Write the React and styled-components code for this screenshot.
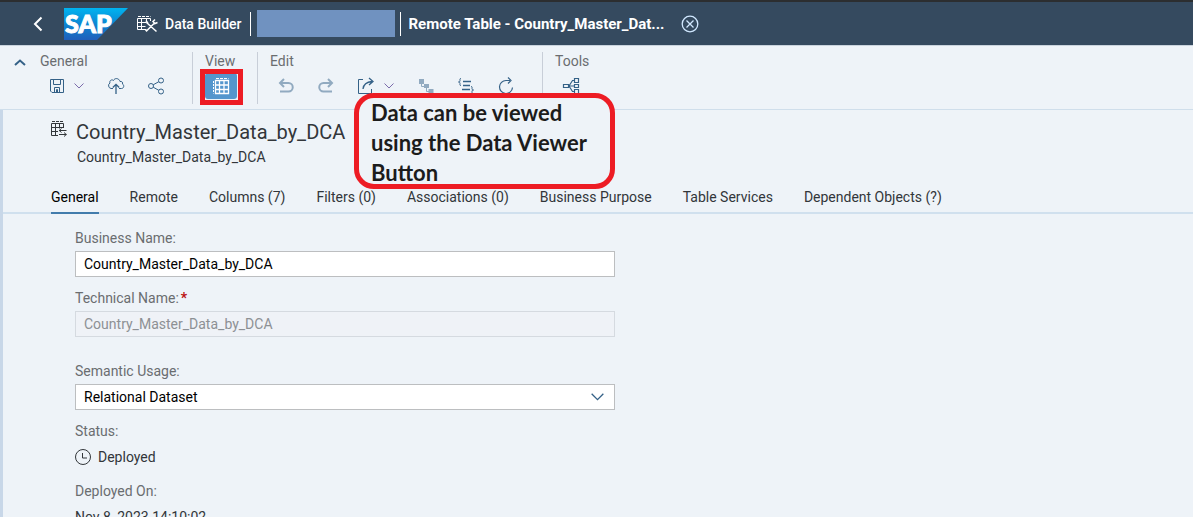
import React, { useState } from "react";
import styled, { createGlobalStyle, css } from "styled-components";

const GlobalStyle = createGlobalStyle`
  * { box-sizing: border-box; }
  body {
    margin: 0;
    background: #eef3f8;
    color: #32363a;
    font-family: Roboto, "Liberation Sans", sans-serif;
    font-size: 14px;
    line-height: 18px;
  }
  button, input, select { font: inherit; }
`;

const Page = styled.div`
  display: flex;
  flex-direction: column;
  height: 100vh;
  overflow: hidden;
`;

const Shell = styled.header`
  display: flex;
  flex: none;
  align-items: center;
  height: 46px;
  padding-left: 24px;
  border-top: 2px solid #2c2e30;
  border-bottom: 1px solid #c9d3dd;
  background: #354a5f;
  color: #fff;
`;

const IconButton = styled.button`
  display: flex;
  align-items: center;
  justify-content: center;
  flex: none;
  width: ${(p) => p.$width || 32}px;
  height: 26px;
  padding: 0;
  border: 0;
  border-radius: 3px;
  background: none;
  color: ${(p) => p.$color || "#346187"};
  cursor: pointer;
  ${(p) =>
    p.$active &&
    css`
      background: #5496cd;
      color: #fff;
    `}
  &:disabled {
    color: #91aac0;
    cursor: default;
  }
`;

const Logo = styled.svg`
  flex: none;
  margin: 0 9px 0 12px;
`;

const AppLink = styled.a`
  display: flex;
  align-items: center;
  gap: 7px;
  color: #fff;
  font-weight: 500;
  text-decoration: none;
  white-space: nowrap;
`;

const ShellDivider = styled.span`
  width: 1px;
  height: 24px;
  margin-left: ${(p) => p.$gap}px;
  background: #fff;
`;

const SpaceName = styled.span`
  width: 138px;
  height: 27px;
  margin-left: 6px;
  background: #7092c0;
`;

const ObjectName = styled.h1`
  margin: 0 8px 0 7px;
  font-size: 15px;
  font-weight: 700;
  line-height: 18px;
  width: 258px;
  white-space: nowrap;
`;

const Toolbar = styled.div`
  display: flex;
  flex: none;
  height: 64px;
  padding: 6px 0 5px;
  border-bottom: 1px solid #cfdeeb;
`;

const Collapse = styled.div`
  width: 40px;
  padding: 0 0 0 4px;
  margin-top: -3px;
`;

const Group = styled.section`
  padding: 0 20px 0 ${(p) => (p.$first ? 0 : 12)}px;
  border-left: ${(p) => (p.$first ? 0 : 1)}px solid #c8ced8;
`;

const GroupTitle = styled.h2`
  margin: 0 0 3px;
  color: #6a6d70;
  font-size: 14px;
  font-weight: 400;
  line-height: 18px;
`;

const Tools = styled.div`
  display: flex;
  gap: 8px;
`;

const Split = styled.div`
  display: flex;
  width: 52px;
`;

const Highlight = styled.div`
  position: relative;
  &::after {
    content: "";
    position: absolute;
    inset: -4px -6px -6px -5px;
    border: 5px solid #ed1c24;
    pointer-events: none;
  }
`;

const Content = styled.main`
  position: relative;
  flex: 1;
  border-left: 3px solid #c8d7e8;
`;

const ObjectHeader = styled.div`
  display: flex;
  gap: 8px;
  padding: 10px 0 0 48px;
`;

const ObjectTitle = styled.h2`
  margin: 0;
  font-size: 20px;
  font-weight: 400;
  line-height: 24px;
`;

const Subtitle = styled.p`
  margin: 4px 0 0 1px;
`;

const TabBar = styled.nav`
  display: flex;
  gap: 31px;
  margin-top: 20px;
  padding-left: 48px;
  border-bottom: 2px solid #d0e0ee;
`;

const Tab = styled.button`
  height: 28px;
  margin-bottom: -2px;
  padding: 0 0 4px;
  border: 0;
  border-bottom: 2px solid ${(p) => (p.$selected ? "#427cac" : "transparent")};
  background: none;
  color: ${(p) => (p.$selected ? "#000" : "#32363a")};
  white-space: nowrap;
  cursor: pointer;
`;

const Form = styled.form`
  display: flex;
  flex-direction: column;
  gap: 12px;
  max-width: 612px;
  padding: 15px 0 0 72px;
`;

const Field = styled.div`
  display: flex;
  flex-direction: column;
  gap: 4px;
  margin-bottom: ${(p) => (p.$wide ? 13 : 0)}px;
`;

const Label = styled.label`
  color: #6a6d70;
`;

const Required = styled.span`
  margin-left: 2px;
  color: #bb1111;
  font-weight: 700;
`;

const control = css`
  width: 100%;
  height: 26px;
  padding: 0 8px;
  border: 1px solid #bcbec0;
  border-radius: 0;
  background: #fff;
  color: #000;
`;

const Input = styled.input`
  ${control}
  &:disabled {
    border-color: #d5dae0;
    background: #eff2f7;
    color: #8d9094;
  }
`;

const SelectWrap = styled.div`
  display: grid;
  align-items: center;
  > * { grid-area: 1 / 1; }
  > svg {
    justify-self: end;
    margin-right: 11px;
    color: #346187;
    pointer-events: none;
  }
`;

const Select = styled.select`
  ${control}
  appearance: none;
`;

const Value = styled.div`
  display: flex;
  align-items: center;
  gap: 7px;
  min-height: 26px;
`;

const Callout = styled.aside`
  position: absolute;
  top: -17px;
  left: 351px;
  width: 261px;
  height: 96px;
  padding: 0 8px 0 12px;
  border: 5px solid #ed1c24;
  border-radius: 20px;
  background: #eef3f8;
  color: #1c1c1c;
  font-family: Lato, "Open Sans", sans-serif;
  font-size: 22px;
  font-weight: 700;
  line-height: 30px;
`;

const Icon = ({ size = 18, stroke = 1, children }) => (
  <svg
    width={size}
    height={size}
    viewBox={`0 0 ${size} ${size}`}
    fill="none"
    stroke="currentColor"
    strokeWidth={stroke}
    aria-hidden="true"
  >
    {children}
  </svg>
);

const Chevron = ({ width = 10, height = 6, color = "currentColor" }) => (
  <svg width={width} height={height} viewBox="0 0 10 6" fill="none" stroke={color} aria-hidden="true">
    <path d="M.5.5 5 5 9.500.5" />
  </svg>
);

const SapLogo = () => (
  <Logo width="64" height="32" viewBox="0 0 64 32" role="img" aria-label="SAP">
    <defs>
      <linearGradient id="sap" x1="0" y1="0" x2="0" y2="1">
        <stop offset="0" stopColor="#00b4f0" />
        <stop offset="0.5" stopColor="#0d86d2" />
        <stop offset="1" stopColor="#1f5fbb" />
      </linearGradient>
    </defs>
    <path d="M0 0h64L33 32H0z" fill="url(#sap)" />
    <text x="1" y="25" fill="#fff" stroke="#fff" strokeWidth="1" fontFamily="Lato" fontWeight="900" fontSize="25">
      SAP
    </text>
  </Logo>
);

const BuilderIcon = () => (
  <svg width="21" height="18" viewBox="0 0 21 18" fill="none" stroke="currentColor" aria-hidden="true">
    <path d="M1 1.500H13.500" strokeDasharray="3 1" />
    <path d="M9 14.500H.5v-11h13V6M.5 7.500h9M.5 11.500h8M4.500 3.500v11M9.500 3.500v4" />
    <path d="m9.500 16 8-8M9.500 7.500l10 9M18 4.500l-2 2 2 2 2.500-1M9 5.500l2 3M8.500 14.500l1.500 2" strokeWidth="1.500" />
  </svg>
);

const SaveIcon = () => (
  <Icon>
    <path d="M3.500 2.500h13v13H5L3.500 14zM6.500 2.500v5h7v-5M7.500 15.500v-5h5v5M9.500 15v-2.500h1V15" />
  </Icon>
);

const CloudIcon = () => (
  <Icon>
    <path d="M6 11.500H4a3 3 0 0 1-1-5.500C2 3.500 5 2 6.500 3.500 7.500.8 12 .8 13 4.500c2-.5 3 1 2.500 2.500 2 1 1.500 4.500-1 4.500H12" />
    <path d="M9 17V7.500M5.800 10.500 9 7.300l3.200 3.200" strokeWidth="1.300" />
  </Icon>
);

const ShareIcon = () => (
  <Icon>
    <circle cx="4" cy="9" r="2.500" />
    <circle cx="14" cy="3.500" r="2.500" />
    <circle cx="14" cy="14.500" r="2.500" />
    <path d="m6.200 7.800 5.600-3.100M6.200 10.200l5.600 3.100" />
  </Icon>
);

const TableIcon = () => (
  <Icon>
    <path d="M4 1.500h12.500" strokeDasharray="3 1" />
    <path d="M1.500 4v12.500" strokeDasharray="2 1" />
    <path d="M3.500 3.500h13v13h-13zM3.500 8h13M3.500 12.500h13M7.500 3.500v13M12 3.500v13" strokeWidth="1.300" />
  </Icon>
);

const UndoIcon = ({ flip }) => (
  <Icon size={16} stroke={2}>
    <g transform={flip ? "translate(16 0) scale(-1 1)" : undefined}>
      <path d="M6 1 2 5l4 4M2 5h8.500a4 4 0 0 1 0 8.500H2" />
    </g>
  </Icon>
);

const ExportIcon = () => (
  <Icon>
    <path d="M6 2.500H1.500v14h13V12" />
    <path d="M6 12c.5-4.500 3-7 9-7.500M12 1l4 3.500L12 8" strokeWidth="1.300" />
  </Icon>
);

const LineageIcon = () => (
  <Icon size={16}>
    <g fill="currentColor" stroke="none">
      <path d="M1 1h5v5H1zM6 6h5v4H6zM10.500 11h5v4.500h-5z" />
    </g>
    <path d="M3.500 6v2.500H6M8.500 10v3.500H11" />
  </Icon>
);

const CodeIcon = () => (
  <Icon>
    <path d="M4 1.500c-1.500 0-1 1-1 2S2.500 5 1.500 5C2.500 5 3 5.500 3 6.500s-.5 2 1 2M14 9.500c1.500 0 1 1 1 2s.5 1.500 1.500 1.500c-1 0-1.500.5-1.500 1.500s.5 2-1 2" />
    <path d="M6 4.500h8M6 8.500h7M5 12.500h8" strokeWidth="1.300" />
  </Icon>
);

const RefreshIcon = () => (
  <Icon>
    <path d="M13 3.500H9a6.500 6.500 0 1 0 6.500 7M11 .5l3 3-3 3" strokeWidth="1.200" />
  </Icon>
);

const ImpactIcon = () => (
  <Icon>
    <path d="M1.500 7.500h5v3h-5zM12.500 1.500h4v4h-4zM12.500 7.500h4v3h-4zM12.500 12.500h4v4h-4zM6.500 9h6M7 9l3.500-5.500h2M7 9l3.500 5.500h2" strokeWidth="1.200" />
  </Icon>
);

const RemoteTableIcon = () => (
  <Icon size={17}>
    <path d="M1 1.500h12" strokeDasharray="3 1" />
    <path d="M7 15.500H.5v-12h12V8M.5 7.500h12M.5 11.500H7M4.500 3.500v12M8.500 3.500v5" />
    <path d="M8 10.500h7.500M10.500 8.500l-2.300 2 2.300 2M8 14.500h7.500M13 12.500l2.300 2-2.300 2" />
  </Icon>
);

const ClockIcon = () => (
  <Icon size={16}>
    <circle cx="8" cy="8" r="7.500" />
    <path d="M7.500 4v5H12" />
  </Icon>
);

const TABS = [
  "General",
  "Remote",
  "Columns (7)",
  "Filters (0)",
  "Associations (0)",
  "Business Purpose",
  "Table Services",
  "Dependent Objects (?)",
];

export default function App() {
  const [tab, setTab] = useState("General");
  const [name, setName] = useState("Country_Master_Data_by_DCA");

  return (
    <Page>
      <GlobalStyle />
      <Shell>
        <IconButton $width={28} $color="#fff" aria-label="Back">
          <svg width="10" height="16" viewBox="0 0 10 16" fill="none" stroke="currentColor" strokeWidth="2">
            <path d="M8.500 1.500 2 8l6.500 6.500" />
          </svg>
        </IconButton>
        <SapLogo />
        <AppLink href="#builder">
          <BuilderIcon />
          Data Builder
        </AppLink>
        <ShellDivider $gap={9} />
        <SpaceName />
        <ShellDivider $gap={5} />
        <ObjectName>Remote Table - Country_Master_Dat...</ObjectName>
        <IconButton $color="#d1e8ff" aria-label="Close">
          <Icon stroke={1.3}>
            <circle cx="9" cy="9" r="7.800" />
            <path d="m5.500 5.500 7 7M12.500 5.500l-7 7" />
          </Icon>
        </IconButton>
      </Shell>

      <Toolbar>
        <Collapse>
          <IconButton aria-label="Collapse toolbar">
            <svg width="12" height="7" viewBox="0 0 12 7" fill="none" stroke="currentColor" strokeWidth="2">
              <path d="m1 6 5-4.500L11 6" />
            </svg>
          </IconButton>
        </Collapse>
        <Group $first>
          <GroupTitle>General</GroupTitle>
          <Tools>
            <Split>
              <IconButton aria-label="Save"><SaveIcon /></IconButton>
              <IconButton $width={14} aria-label="Save options"><Chevron color="#7a6bab" /></IconButton>
            </Split>
            <IconButton aria-label="Deploy"><CloudIcon /></IconButton>
            <IconButton aria-label="Share"><ShareIcon /></IconButton>
          </Tools>
        </Group>
        <Group>
          <GroupTitle>View</GroupTitle>
          <Tools>
            <Highlight>
              <IconButton $active aria-label="Data Viewer"><TableIcon /></IconButton>
            </Highlight>
          </Tools>
        </Group>
        <Group>
          <GroupTitle>Edit</GroupTitle>
          <Tools>
            <IconButton disabled aria-label="Undo"><UndoIcon /></IconButton>
            <IconButton disabled aria-label="Redo"><UndoIcon flip /></IconButton>
            <Split>
              <IconButton aria-label="Export"><ExportIcon /></IconButton>
              <IconButton $width={14} aria-label="Export options"><Chevron color="#7a6bab" /></IconButton>
            </Split>
            <IconButton disabled aria-label="Lineage"><LineageIcon /></IconButton>
            <IconButton aria-label="Edit CSN"><CodeIcon /></IconButton>
            <IconButton aria-label="Refresh"><RefreshIcon /></IconButton>
          </Tools>
        </Group>
        <Group>
          <GroupTitle>Tools</GroupTitle>
          <Tools>
            <IconButton aria-label="Impact and lineage analysis"><ImpactIcon /></IconButton>
          </Tools>
        </Group>
      </Toolbar>

      <Content>
        <ObjectHeader>
          <RemoteTableIcon />
          <div>
            <ObjectTitle>Country_Master_Data_by_DCA</ObjectTitle>
            <Subtitle>Country_Master_Data_by_DCA</Subtitle>
          </div>
        </ObjectHeader>
        <TabBar>
          {TABS.map((t) => (
            <Tab key={t} type="button" $selected={t === tab} onClick={() => setTab(t)}>
              {t}
            </Tab>
          ))}
        </TabBar>
        <Form>
          <Field>
            <Label htmlFor="business">Business Name:</Label>
            <Input id="business" value={name} onChange={(e) => setName(e.target.value)} />
          </Field>
          <Field $wide>
            <Label htmlFor="technical">
              Technical Name:<Required>*</Required>
            </Label>
            <Input id="technical" disabled value="Country_Master_Data_by_DCA" />
          </Field>
          <Field>
            <Label htmlFor="usage">Semantic Usage:</Label>
            <SelectWrap>
              <Select id="usage" defaultValue="Relational Dataset">
                <option>Relational Dataset</option>
                <option>Dimension</option>
                <option>Fact</option>
              </Select>
              <Chevron width={13} height={8} />
            </SelectWrap>
          </Field>
          <Field>
            <Label as="span">Status:</Label>
            <Value>
              <ClockIcon />
              Deployed
            </Value>
          </Field>
          <Field>
            <Label as="span">Deployed On:</Label>
            <Value>Nov 8, 2023 14:10:02</Value>
          </Field>
        </Form>
        <Callout>Data can be viewed using the Data Viewer Button</Callout>
      </Content>
    </Page>
  );
}
